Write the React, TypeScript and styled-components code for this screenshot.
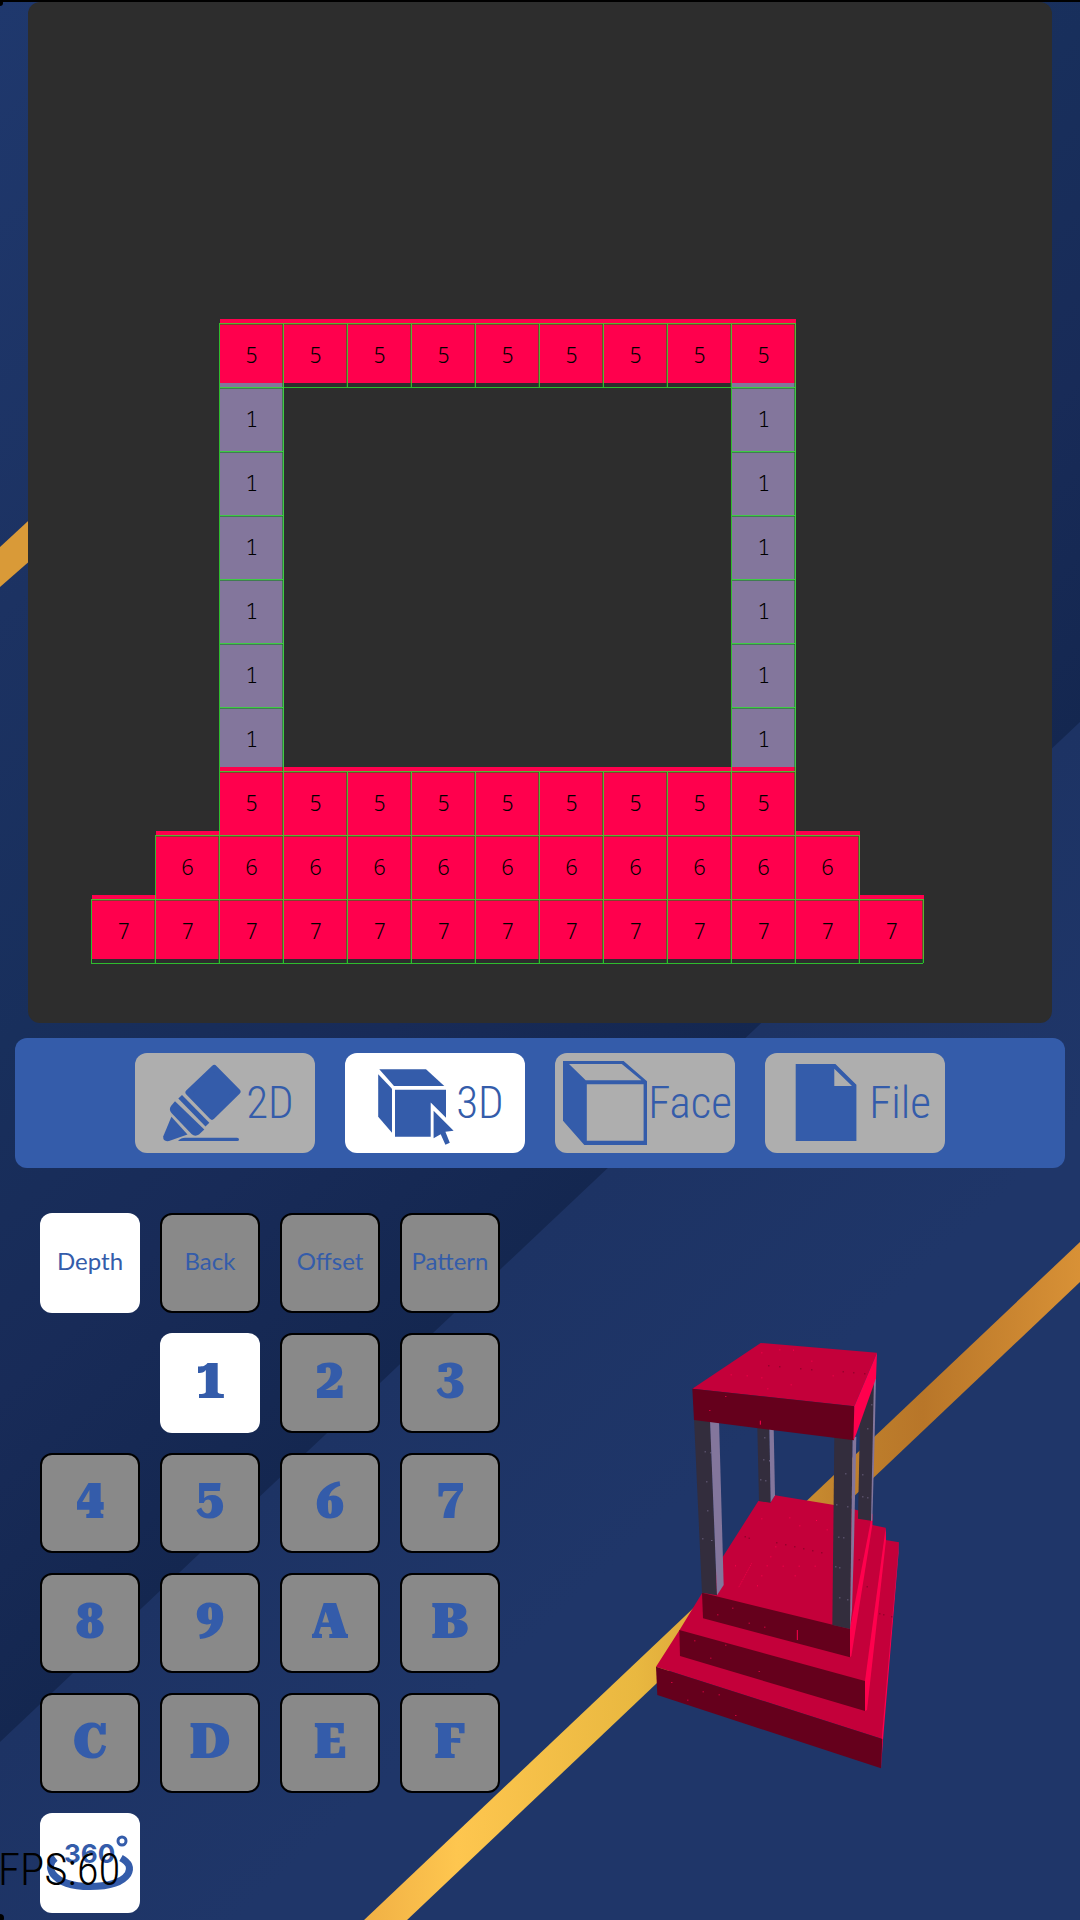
import React from "react";
import styled, { createGlobalStyle, css } from "styled-components";

const BLUE = "#345caa";
const RED = "#ff004d";
const MAUVE = "#83769c";
const LINE = "rgba(46, 224, 46, 0.8)";
const LINE_DARK = "rgba(10, 130, 20, 0.55)";

const GlobalStyle = createGlobalStyle`
  * { box-sizing: border-box; }
  body { margin: 0; background: #1f3669; }
`;

const Page = styled.div`
  position: relative;
  display: flex;
  flex-direction: column;
  min-height: 100vh;
  border-top: 2px solid #000;
  overflow: hidden;
  isolation: isolate;
`;

const BackdropArt = styled.svg`
  position: absolute;
  inset: 0;
  width: 100%;
  height: 100%;
  z-index: -1;
`;

const Canvas = styled.main`
  margin: 0 28px 15px;
  padding: 317px 0 60px;
  border-radius: 12px;
  background: #2d2d2d;
`;

const Board = styled.div`
  display: grid;
  justify-content: start;
`;

const Layer = styled.div`
  grid-area: 1 / 1;
  display: grid;
  grid-template-columns: repeat(16, 64px);
  grid-auto-rows: 64px;
`;

const LineLayer = styled(Layer)`
  margin: 4px 0 0 -1px;
`;

const Fill = styled.div<{ $kind: string }>`
  background: ${(p) => (p.$kind === "." ? "transparent" : p.$kind === "1" ? MAUVE : RED)};
`;

const Cell = styled.div<{ $filled: boolean; $lastInRow: boolean; $lastInColumn: boolean }>`
  display: flex;
  align-items: center;
  justify-content: center;
  padding-bottom: 4px;
  font: 300 22px/22px "Noto Sans Mono", "DejaVu Sans Mono", monospace;
  color: #000;
  ${(p) =>
    p.$filled &&
    css`
      border-top: 1px solid ${LINE};
      border-left: 1px solid ${LINE};
      box-shadow:
        inset 0 1px 0 ${LINE_DARK},
        inset -1px 0 0 ${LINE_DARK},
        ${p.$lastInRow ? "1px" : "0"} 0 0 ${LINE},
        0 ${p.$lastInColumn ? "1px" : "0"} 0 ${LINE};
    `}
`;

const Toolbar = styled.nav`
  display: flex;
  justify-content: center;
  gap: 30px;
  margin: 0 15px;
  padding: 15px;
  border-radius: 12px;
  background: ${BLUE};
`;

const ModeButton = styled.button<{ $active?: boolean }>`
  display: flex;
  align-items: center;
  width: 180px;
  height: 100px;
  padding: 0;
  border: 0;
  border-radius: 12px;
  background: ${(p) => (p.$active ? "#fff" : "#aeaeae")};
  color: ${BLUE};
  cursor: pointer;
`;

const ModeIcon = styled.svg`
  flex: none;
  width: 110px;
  height: 100px;
  fill: currentColor;
`;

const ModeLabel = styled.span`
  width: 90px;
  margin-left: -20px;
  flex: none;
  text-align: center;
  font: 300 45px/100px "Roboto Condensed", Roboto, sans-serif;
`;

const Workbench = styled.section`
  display: flex;
  flex: 1;
  padding: 45px 20px 7px 40px;
`;

const KeyPad = styled.div`
  display: grid;
  flex: none;
  grid-template-columns: repeat(4, 100px);
  grid-auto-rows: 100px;
  gap: 20px;
`;

const Key = styled.button<{ $active?: boolean }>`
  display: flex;
  align-items: center;
  justify-content: center;
  padding: 0 0 4px;
  border: ${(p) => (p.$active ? "0" : "2px solid #000")};
  border-radius: 12px;
  background: ${(p) => (p.$active ? "#fff" : "#898989")};
  color: ${BLUE};
  font: 900 50px/50px "Roboto Serif", "DejaVu Serif", serif;
  font-variant-numeric: lining-nums;
  cursor: pointer;
`;

const TabKey = styled(Key)`
  font: 400 24px/24px Lato, "Open Sans", sans-serif;
`;

const IconKey = styled(Key)`
  padding: 0;
`;

const KeyGap = styled.span``;

const SpinIcon = styled.svg`
  width: 100px;
  height: 100px;
`;

const SpinText = styled.text`
  font: 700 26px Inter, Roboto, sans-serif;
  fill: ${BLUE};
`;

const Preview = styled.div`
  display: flex;
  flex: 1;
  align-items: center;
  justify-content: center;
  padding-bottom: 26px;
`;

const Model = styled.svg`
  width: 320px;
  height: 480px;
`;

const Fps = styled.output`
  position: absolute;
  left: -2px;
  bottom: 28px;
  font: 300 45px/45px "Roboto Condensed", Roboto, sans-serif;
  color: #000;
`;

const ROWS = [
  "...555555555....",
  "...1.......1....",
  "...1.......1....",
  "...1.......1....",
  "...1.......1....",
  "...1.......1....",
  "...1.......1....",
  "...555555555....",
  "..66666666666...",
  ".7777777777777..",
];

const CELLS = ROWS.flatMap((row, y) =>
  [...row].map((kind, x) => ({
    id: `${x}-${y}`,
    kind,
    lastInRow: (row[x + 1] ?? ".") === ".",
    lastInColumn: (ROWS[y + 1]?.[x] ?? ".") === ".",
  })),
);

function Backdrop() {
  return (
    <BackdropArt viewBox="0 0 1080 1918" preserveAspectRatio="none" aria-hidden="true">
      <defs>
        <linearGradient id="deep" gradientUnits="userSpaceOnUse" x1="0" y1="0" x2="870" y2="921">
          <stop offset="0" stopColor="#1f386d" />
          <stop offset="0.35" stopColor="#1c3262" />
          <stop offset="0.6" stopColor="#182f5c" />
          <stop offset="0.8" stopColor="#182b58" />
          <stop offset="1" stopColor="#142750" />
        </linearGradient>
        <linearGradient id="shore" gradientUnits="userSpaceOnUse" x1="870" y1="921" x2="1070" y2="1133">
          <stop offset="0" stopColor="#1d3364" />
          <stop offset="1" stopColor="#1f3669" />
        </linearGradient>
        <linearGradient id="gold" gradientUnits="userSpaceOnUse" x1="364" y1="0" x2="1080" y2="0">
          <stop offset="0" stopColor="#f0b045" />
          <stop offset="0.13" stopColor="#fec64f" />
          <stop offset="0.38" stopColor="#e9b840" />
          <stop offset="0.68" stopColor="#bf802c" />
          <stop offset="0.78" stopColor="#b87629" />
          <stop offset="1" stopColor="#d89136" />
        </linearGradient>
      </defs>
      <rect width="1080" height="1918" fill="url(#shore)" />
      <path d="M0 0H1080V720L0 1740Z" fill="url(#deep)" />
      <path d="M0 545L40 508V550L0 585Z" fill="#d99a38" />
      <path d="M363 1919L1080 1240V1280L406 1919Z" fill="url(#gold)" />
      <circle cx="0" cy="1" r="3" />
      <circle cx="0" cy="1916" r="4" />
    </BackdropArt>
  );
}

function MarkerIcon() {
  return (
    <ModeIcon viewBox="0 0 110 100" aria-hidden="true">
      <path
        d="M79.300 15L102.500 38.500L77 63.700L53.500 39.500Z"
        stroke="currentColor"
        strokeWidth="6"
        strokeLinejoin="round"
      />
      <path d="M47 42L43.300 45.500L70.500 73.500L74.300 69.700Z" />
      <path d="M40 48.300L69.300 76.500L64 81.500Q60 84 56.500 81L36.500 60Q33.500 56.500 36 53Z" />
      <path d="M36.400 63.700L52.500 81.500L34 88Q28 89 28.200 83.500Z" />
      <path d="M43 88Q46 84.700 50 84.700H102Q104 84.700 104 86.400T102 88Z" />
    </ModeIcon>
  );
}

function CubeCursorIcon() {
  return (
    <ModeIcon viewBox="0 0 110 100" aria-hidden="true">
      <path d="M34.300 16.300H81L99.300 33H49Z" />
      <path d="M33.200 21.300L47 35.700V79.700L33.200 63.700Z" />
      <path d="M50 36.700H101V64.700L85.700 49.500V83.700H50Z" />
      <path d="M88.600 57.700L108.600 77.700L100.400 78.700L104.800 89.700L100.400 91.700L95.700 81.300L88.600 85.300Z" />
    </ModeIcon>
  );
}

function CubeFaceIcon() {
  return (
    <ModeIcon viewBox="0 0 110 100" aria-hidden="true">
      <path
        fillRule="evenodd"
        d="M8 8H68.600L92 28.300V92H29.300L8 67.700ZM14 11H66.800L86.400 27.300H30.700ZM31.800 31.300H88.600V87.700H31.800Z"
      />
    </ModeIcon>
  );
}

function PageIcon() {
  return (
    <ModeIcon viewBox="0 0 110 100" aria-hidden="true">
      <path fillRule="evenodd" d="M30.700 11H70.400L91.400 31.700V88H30.700ZM69.300 15.700L87 33H69.300Z" />
    </ModeIcon>
  );
}

function Orbit() {
  return (
    <SpinIcon viewBox="0 0 100 100" aria-hidden="true">
      <SpinText x="24" y="50">360</SpinText>
      <circle cx="82" cy="28" r="4" fill="none" stroke={BLUE} strokeWidth="3" />
      <path
        d="M15.500 45C10 49 9 55 13 61C20 70 34 73.500 50 73.500C66 73.500 82 70 88 61C91 55 90 50 81 45"
        fill="none"
        stroke={BLUE}
        strokeWidth="7"
      />
    </SpinIcon>
  );
}

const SPECKS = [
  [424, 127], [478, 118], [519, 119], [574, 152], [380, 196], [424, 202], [332, 193], [512, 223], [638, 196], [442, 235],
  [316, 258], [268, 300], [424, 625], [508, 622], [538, 646], [620, 658], [588, 630], [466, 709], [451, 739], [345, 766],
  [440, 766], [488, 767], [536, 767], [584, 767], [424, 796], [524, 796], [411, 826], [337, 893], [292, 913], [386, 938],
  [433, 950], [223, 991], [316, 1004], [271, 1043], [416, 1083], [154, 1116], [248, 1144], [296, 1153], [202, 1169], [346, 1215],
];

const SHADOW_DOTS = [
  [445, 166], [478, 169], [541, 175], [574, 178], [668, 184], [700, 187], [733, 190], [374, 679], [386, 683], [469, 697],
  [496, 703], [523, 709], [550, 715], [577, 721], [604, 727], [740, 829], [716, 748], [778, 910], [790, 913], [814, 919],
];

const PILLAR_DOTS = [
  [254, 424], [271, 427], [259, 514], [262, 601], [247, 685], [274, 690], [433, 382], [430, 448], [447, 451], [421, 508],
  [436, 511], [676, 490], [649, 583], [682, 589], [655, 680], [670, 682], [646, 769], [658, 772], [658, 862], [682, 868],
  [754, 283], [742, 355], [727, 493], [727, 559], [742, 562],
];

function Temple() {
  return (
    <Model viewBox="0 0 960 1440" role="img" aria-label="3D preview">
      <path
        d="M108 1070L180 958L246 850L310 738L415 573L452 577L465 556L638 584L710 600L757 612V645L797 653V690L837 697L787 1287Z"
        fill="#c4003a"
      />
      <g fill={RED}>
        <path d="M837 697L785 1287L783 1375L789 1290L836 725Z" />
        <path d="M797 653L735 1113V1203L741 1200L798 690Z" />
        <path d="M757 610L690 955V1042L694 1038L757 645Z" />
      </g>
      <g fill="#65001c">
        <path d="M108 1070L787 1287L783 1375L112 1155Z" />
        <path d="M178 960L735 1113V1203L180 1038Z" />
        <path d="M246 848L690 957V1042L249 925Z" />
      </g>
      <g fill="#332d3d">
        <path d="M412 350H448L452 578L417 573Z" />
        <path d="M720 330L764 205L762 380L753 632L714 626Z" />
        <path d="M222 325H270L291 856L246 848Z" />
        <path d="M643 380H698L690 957L637 945Z" />
      </g>
      <g fill={MAUVE}>
        <path d="M448 350H461L465 556L452 577Z" />
        <path d="M762 200H768L764 380L757 632H753Z" />
        <path d="M270 330H297L311 825L291 856Z" />
        <path d="M698 380H709L702 700L696 900L690 957Z" />
      </g>
      <path d="M217 236L422 99L771 128L703 289Z" fill="#c4003a" />
      <path d="M217 236L703 289L702 391L222 330Z" fill="#65001c" />
      <path d="M771 128L703 289L700 391L708 374L768 205Z" fill={RED} />
      {SPECKS.map(([x, y]) => (
        <rect key={`${x}-${y}`} x={x} y={y} width="3" height="3" fill={RED} />
      ))}
      {SHADOW_DOTS.map(([x, y]) => (
        <rect key={`${x}-${y}`} x={x} y={y} width="3" height="3" fill="#65001c" />
      ))}
      {PILLAR_DOTS.map(([x, y]) => (
        <rect key={`${x}-${y}`} x={x} y={y} width="3" height="3" fill={MAUVE} />
      ))}
      <path d="M395 760L355 834" stroke={RED} strokeWidth="2" strokeDasharray="3 3" />
      <path d="M532 960V990M421 332V344" stroke={RED} strokeWidth="3" />
    </Model>
  );
}

const MODES = [
  { label: "2D", Icon: MarkerIcon },
  { label: "3D", Icon: CubeCursorIcon },
  { label: "Face", Icon: CubeFaceIcon },
  { label: "File", Icon: PageIcon },
];

const TABS = ["Depth", "Back", "Offset", "Pattern"];
const DIGITS = [..."123456789ABCDEF"];

export default function App() {
  return (
    <Page>
      <GlobalStyle />
      <Backdrop />
      <Canvas>
        <Board>
          <Layer>
            {CELLS.map((cell) => (
              <Fill key={cell.id} $kind={cell.kind} />
            ))}
          </Layer>
          <LineLayer>
            {CELLS.map((cell) => (
              <Cell
                key={cell.id}
                $filled={cell.kind !== "."}
                $lastInRow={cell.lastInRow}
                $lastInColumn={cell.lastInColumn}
              >
                {cell.kind !== "." && cell.kind}
              </Cell>
            ))}
          </LineLayer>
        </Board>
      </Canvas>
      <Toolbar>
        {MODES.map(({ label, Icon }) => (
          <ModeButton key={label} type="button" $active={label === "3D"}>
            <Icon />
            <ModeLabel>{label}</ModeLabel>
          </ModeButton>
        ))}
      </Toolbar>
      <Workbench>
        <KeyPad>
          {TABS.map((tab) => (
            <TabKey key={tab} type="button" $active={tab === "Depth"}>
              {tab}
            </TabKey>
          ))}
          <KeyGap />
          {DIGITS.map((digit) => (
            <Key key={digit} type="button" $active={digit === "1"}>
              {digit}
            </Key>
          ))}
          <IconKey type="button" $active aria-label="Rotate 360 degrees">
            <Orbit />
          </IconKey>
        </KeyPad>
        <Preview>
          <Temple />
        </Preview>
      </Workbench>
      <Fps>FPS:60</Fps>
    </Page>
  );
}
